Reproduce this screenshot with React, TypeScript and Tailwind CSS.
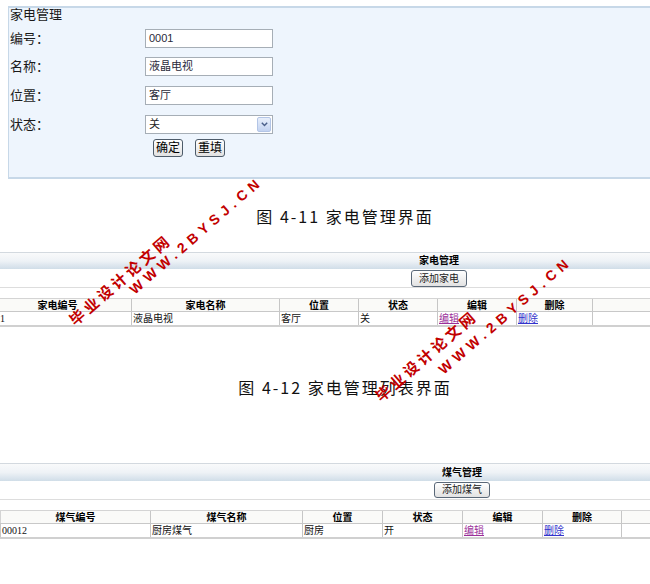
import React from "react";

function Field({ label, value, mtClass }: { label: string; value: string; mtClass: string }) {
  return (
    <div className={`flex h-[19px] items-center ${mtClass}`}>
      <div className="w-[136px] pl-[1px] text-[13px] leading-[15px] text-[#1a1a1a]">{label}</div>
      <div className="flex h-[19px] w-[128px] items-center border border-[#a6aeb6] bg-white pl-[3px] text-[11px] leading-[15px] text-[#2a2a3a]">
        {value}
      </div>
    </div>
  );
}

type Cell = { text: string; kind?: "visited" | "link" };

function Section({
  title,
  button,
  wrapClass,
  barClass,
  btnClass,
  colClasses,
  firstPadClass,
  heads,
  cells,
  firstBorder,
}: {
  title: string;
  button: string;
  wrapClass: string;
  barClass: string;
  btnClass: string;
  colClasses: string[];
  firstPadClass: string;
  heads: string[];
  cells: Cell[];
  firstBorder: boolean;
}) {
  return (
    <div className={wrapClass}>
      <div
        className={`border-t border-[#d3d9df] bg-gradient-to-b from-[#f9fafb] via-[#eef2f6] to-[#d0dde8] text-center text-[10px] font-bold text-black ${barClass}`}
      >
        {title}
      </div>
      <div className="flex h-[19px] justify-center border-b border-[#dddddd] pt-[1px]">
        <button
          className={`w-[56px] rounded-[3px] border border-[#5a6878] bg-gradient-to-b from-[#ffffff] to-[#e2e2e2] text-[10px] text-[#222] ${btnClass}`}
        >
          {button}
        </button>
      </div>
      <div className="mt-[10px] border-b-2 border-[#d0d0d0]">
        <div className={`flex h-[13px] border-t border-[#d4d4d4] bg-[#fafaf8] ${firstBorder ? "border-l" : ""}`}>
          {heads.map((h, i) => (
            <div
              key={i}
              className={`${colClasses[i]} shrink-0 border-r border-[#c6c6c6] text-center text-[10px] font-bold leading-[13px] text-black`}
            >
              {h}
            </div>
          ))}
        </div>
        <div className={`flex h-[14px] border-t border-[#c8c8c8] bg-white ${firstBorder ? "border-l" : ""}`}>
          {cells.map((c, i) => (
            <div
              key={i}
              className={`${colClasses[i]} ${i === 0 ? firstPadClass : "pl-[1px]"} shrink-0 border-r border-[#c6c6c6] text-[10px] leading-[13px] text-[#111] font-['Liberation_Serif','Noto_Sans_CJK_SC',serif]`}
            >
              {c.kind === "visited" ? (
                <span className="text-[#9a2f9a] underline">{c.text}</span>
              ) : c.kind === "link" ? (
                <span className="text-[#3333cc] underline">{c.text}</span>
              ) : (
                c.text
              )}
            </div>
          ))}
        </div>
      </div>
    </div>
  );
}

function Watermark({ line1Class, line2Class }: { line1Class: string; line2Class: string }) {
  return (
    <>
      <div
        className={`pointer-events-none absolute origin-top-left rotate-[-41deg] whitespace-nowrap text-[15px] font-bold leading-[16px] tracking-[3.5px] text-[#c20000] font-['Noto_Sans_CJK_SC',sans-serif] ${line1Class}`}
      >
        毕业设计论文网
      </div>
      <div
        className={`pointer-events-none absolute origin-top-left rotate-[-41deg] whitespace-nowrap text-[14px] font-bold leading-[14px] tracking-[5px] text-[#c20000] font-['Liberation_Sans',sans-serif] ${line2Class}`}
      >
        WWW.2BYSJ.CN
      </div>
    </>
  );
}

export default function App() {
  return (
    <div className="relative h-[584px] w-[650px] overflow-hidden bg-white font-['Liberation_Sans','Noto_Sans_CJK_SC',sans-serif]">
      {/* Form panel */}
      <div className="ml-[8px] mt-[6px] h-[173px] w-[660px] border-b-2 border-l border-t-2 border-[#c7d8e8] bg-[#eef5fd]">
        <div className="h-[21px] pl-[1px] text-[13px] leading-[14px] text-[#1a1a1a]">家电管理</div>
        <Field label="编号：" value="0001" mtClass="mt-0" />
        <Field label="名称：" value="液晶电视" mtClass="mt-[9px]" />
        <Field label="位置：" value="客厅" mtClass="mt-[10px]" />
        <div className="mt-[10px] flex h-[19px] items-center">
          <div className="w-[136px] pl-[1px] text-[13px] leading-[15px] text-[#1a1a1a]">状态：</div>
          <div className="flex h-[19px] w-[128px] items-center border border-[#a6aeb6] bg-white pl-[3px] text-[11px] leading-[15px] text-[#222]">
            关
            <div className="ml-auto mr-[1px] flex h-[15px] w-[14px] items-center justify-center rounded-[2px] border border-[#b3c5e6] bg-gradient-to-b from-[#e8effb] to-[#c3d3f1]">
              <svg width="7" height="5" viewBox="0 0 7 5">
                <path d="M0.8 0.8 L3.5 3.6 L6.2 0.8" fill="none" stroke="#4a5f8a" strokeWidth="1.4" />
              </svg>
            </div>
          </div>
        </div>
        <div className="mt-[5px] flex gap-[12px] pl-[144px]">
          <button className="h-[18px] w-[30px] rounded-[3px] border border-[#4d5b69] bg-gradient-to-b from-white to-[#e2e2e2] text-[12px] leading-[16px] text-black">
            确定
          </button>
          <button className="h-[18px] w-[30px] rounded-[3px] border border-[#4d5b69] bg-gradient-to-b from-white to-[#e2e2e2] text-[12px] leading-[16px] text-black">
            重填
          </button>
        </div>
      </div>

      {/* Caption 1 */}
      <div className="mt-[28px] h-[18px] pl-[40px] text-center text-[16px] leading-[18px] tracking-[2px] text-[#111] font-['Noto_Sans_CJK_SC',sans-serif]">
        图 4-11 家电管理界面
      </div>

      {/* Section 2 */}
      <Section
        title="家电管理"
        button="添加家电"
        wrapClass="mt-[27px] -ml-[16px] w-[910px]"
        barClass="h-[17px] leading-[16px]"
        btnClass="h-[17px] leading-[15px]"
        colClasses={["w-[148px]", "w-[148px]", "w-[79px]", "w-[79px]", "w-[79px]", "w-[76px]"]}
        firstPadClass="pl-[16px]"
        heads={["家电编号", "家电名称", "位置", "状态", "编辑", "删除"]}
        cells={[
          { text: "1" },
          { text: "液晶电视" },
          { text: "客厅" },
          { text: "关" },
          { text: "编辑", kind: "visited" },
          { text: "删除", kind: "link" },
        ]}
        firstBorder={false}
      />

      {/* Caption 2 */}
      <div className="mt-[51px] h-[18px] pl-[40px] text-center text-[16px] leading-[18px] tracking-[2px] text-[#111] font-['Noto_Sans_CJK_SC',sans-serif]">
        图 4-12 家电管理列表界面
      </div>

      {/* Section 3 */}
      <Section
        title="煤气管理"
        button="添加煤气"
        wrapClass="mt-[67px] w-[924px]"
        barClass="h-[18px] leading-[17px]"
        btnClass="h-[16px] leading-[14px]"
        colClasses={["w-[150px]", "w-[152px]", "w-[80px]", "w-[80px]", "w-[80px]", "w-[79px]"]}
        firstPadClass="pl-[1px]"
        heads={["煤气编号", "煤气名称", "位置", "状态", "编辑", "删除"]}
        cells={[
          { text: "00012" },
          { text: "厨房煤气" },
          { text: "厨房" },
          { text: "开" },
          { text: "编辑", kind: "visited" },
          { text: "删除", kind: "link" },
        ]}
        firstBorder={true}
      />

      {/* Watermarks */}
      <Watermark line1Class="left-[66px] top-[316px]" line2Class="left-[127px] top-[286px]" />
      <Watermark line1Class="left-[372px] top-[392px]" line2Class="left-[436px] top-[366px]" />
    </div>
  );
}
